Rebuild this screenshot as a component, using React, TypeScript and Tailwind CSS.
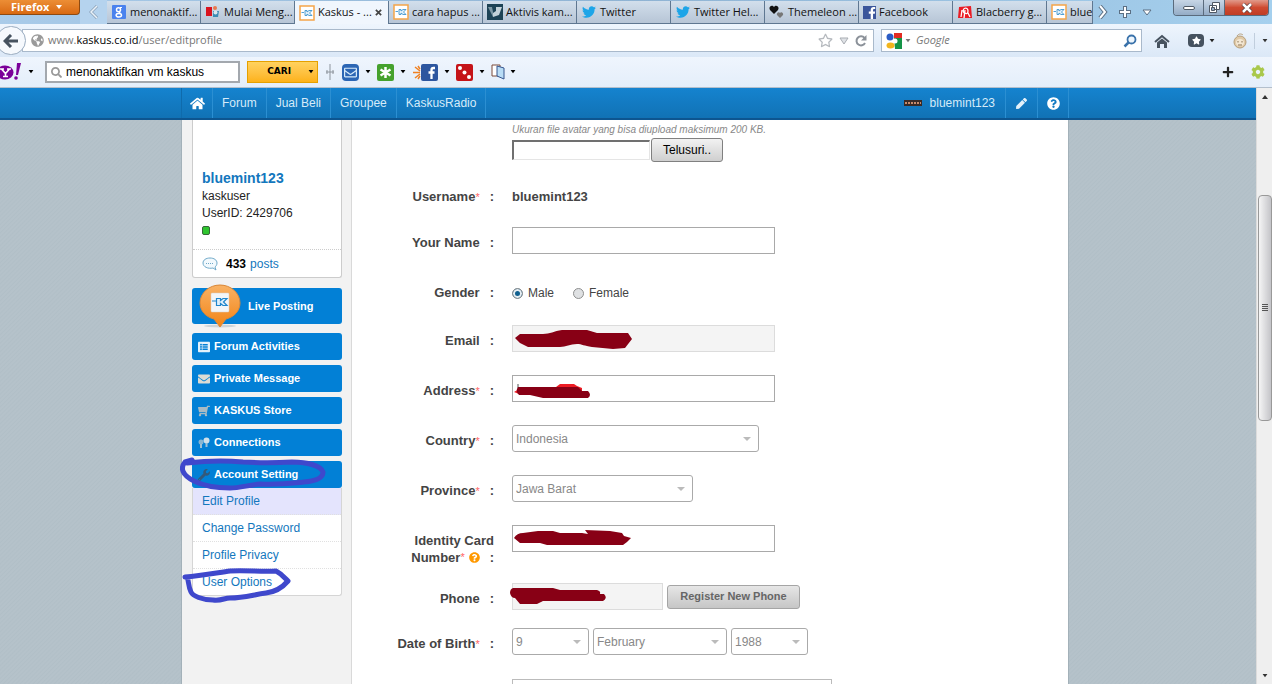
import type { ReactNode } from 'react'
import {
  FaFacebookF,
  FaHome,
  FaPen,
  FaQuestionCircle,
  FaRegEnvelope,
  FaSearch,
  FaShoppingCart,
  FaTwitter,
  FaWrench,
  FaEnvelope,
  FaListAlt,
  FaGlobeAmericas,
  FaRegStar,
  FaPlus,
  FaCog,
  FaStar,
} from 'react-icons/fa'

const KaskusIcon = () => (
  <svg viewBox="0 0 16 16" className="h-4 w-4 shrink-0">
    <rect x="1" y="1" width="14" height="14" fill="#fff" stroke="#f5a54a" strokeWidth="1.5" />
    <path d="M2.500 7.500h2.500M6 5.500h2V7l2-1.500h3L10.500 8 13 10.500h-3L8 9v1.500H6z" stroke="#3f95cf" strokeWidth="0.900" fill="#e3f1fa" />
  </svg>
)

const GoogleIcon = () => (
  <svg viewBox="0 0 16 16" className="h-4 w-4 shrink-0">
    <rect x="1" y="1" width="14" height="14" rx="1" fill="#4a82ee" />
    <circle cx="7.500" cy="5.800" r="2" fill="none" stroke="#fff" strokeWidth="1.500" />
    <ellipse cx="7.800" cy="11.300" rx="2.700" ry="1.700" fill="none" stroke="#fff" strokeWidth="1.500" />
    <path d="M9 3.500h2M8 8l1.500 1.500" stroke="#fff" strokeWidth="1.200" />
  </svg>
)

const ForumIcon = () => (
  <svg viewBox="0 0 16 16" className="h-4 w-4 shrink-0">
    <path d="M1 3h6v9H1z" fill="#d9131f" />
    <circle cx="10" cy="4" r="2" fill="#e9794d" />
    <path d="M8 7h6l-1 6H8z" fill="#3c8cb5" />
    <circle cx="10.500" cy="8.500" r="2" fill="#dbe7ee" />
  </svg>
)

const VbulletinIcon = () => (
  <svg viewBox="0 0 16 16" className="h-4 w-4 shrink-0">
    <rect width="16" height="16" fill="#1d4356" />
    <path d="M1 3h4l1 5v5L4 9z" fill="#7d98a5" />
    <path d="M6 13V9l3-2V3h6L12 11z" fill="#c3d2d9" />
  </svg>
)

const HeartsIcon = () => (
  <svg viewBox="0 0 16 16" className="h-4 w-4 shrink-0">
    <path d="M5 10L1 6C-1 3 3 0 5 3c2-3 6 0 4 3z" fill="#111" />
    <path d="M11 14l-3-3c-1-2 2-4 3-2 1-2 4 0 3 2z" fill="#777" />
  </svg>
)

const PinterestIcon = () => (
  <svg viewBox="0 0 16 16" className="h-4 w-4 shrink-0">
    <path d="M2 3l12-1 1 12H1z" fill="#ea1c24" />
    <path d="M4 13l1-7M7 9c-3-5 4-7 4-2 0 3-2 3-3 2M8 6l-1 8M11 9l2 4" stroke="#fff" strokeWidth="1.300" fill="none" />
  </svg>
)

const FacebookIcon = () => (
  <span className="flex h-[13px] w-[13px] shrink-0 items-end justify-end bg-[#3b559b]">
    <FaFacebookF className="h-3 w-2 text-white" />
  </span>
)

const TABS: { title: string; icon: ReactNode; active?: boolean }[] = [
  { title: 'menonaktif...', icon: <GoogleIcon /> },
  { title: 'Mulai Meng...', icon: <ForumIcon /> },
  { title: 'Kaskus - ...', icon: <KaskusIcon />, active: true },
  { title: 'cara hapus ...', icon: <KaskusIcon /> },
  { title: 'Aktivis kam...', icon: <VbulletinIcon /> },
  { title: 'Twitter', icon: <FaTwitter className="h-[14px] w-4 shrink-0 text-[#1da5e8]" /> },
  { title: 'Twitter Hel...', icon: <FaTwitter className="h-[14px] w-4 shrink-0 text-[#1da5e8]" /> },
  { title: 'Themeleon ...', icon: <HeartsIcon /> },
  { title: 'Facebook', icon: <FacebookIcon /> },
  { title: 'Blacberry g...', icon: <PinterestIcon /> },
]

const Caret = ({ className = 'text-black' }: { className?: string }) => (
  <svg viewBox="0 0 8 5" className={`h-1 w-2 shrink-0 ${className}`}>
    <path d="M1 0h6L4 4z" fill="currentColor" />
  </svg>
)

const TabStrip = () => (
  <div className="flex h-6 items-start bg-gradient-to-r from-[#a9cbe9] via-[#8fb3d3] to-[#a5d0ee]">
    <button className="flex h-[15px] w-20 shrink-0 items-center gap-1.5 rounded-br border-r border-b border-[#8d4a12] bg-gradient-to-b from-[#ec8e35] to-[#d9690f] pl-[11px] text-[11px] font-bold text-white">
      Firefox
      <svg viewBox="0 0 8 5" className="h-[5px] w-2">
        <path d="M1 0h6L4 4z" fill="#fff" />
      </svg>
    </button>
    <div className="flex h-6 w-[27px] shrink-0 items-center justify-center bg-[#b5d3ee]">
      <svg viewBox="0 0 10 14" className="h-[14px] w-[10px]">
        <path d="M8 1L2 7l6 6" fill="none" stroke="#8ba0b6" strokeWidth="3" />
        <path d="M8 1L2 7l6 6" fill="none" stroke="#e9f2fa" strokeWidth="1.500" />
      </svg>
    </div>
    <div className="flex min-w-0 flex-1 pt-px">
      {TABS.map(tab => (
        <button
          key={tab.title}
          className={`flex h-[23px] w-[94px] shrink-0 items-center gap-[3px] border-r border-[#5f7791] pl-1 text-left whitespace-nowrap text-[#111] ${
            tab.active ? 'bg-[#f0f6fd]' : 'border-b bg-gradient-to-b from-[#d2dfec] to-[#b7c5d6]'
          }`}
        >
          {tab.icon}
          <span>{tab.title}</span>
          {tab.active && (
            <svg viewBox="0 0 8 8" className="ml-auto mr-1.5 h-[7px] w-[7px]">
              <path d="M1 1l6 6M7 1L1 7" stroke="#444" strokeWidth="2" />
            </svg>
          )}
        </button>
      ))}
      <button className="flex h-[23px] w-[46px] min-w-0 items-center gap-[3px] overflow-hidden border-r border-b border-[#5f7791] bg-gradient-to-b from-[#d2dfec] to-[#b7c5d6] pl-1 text-[#111]">
        <KaskusIcon />
        blue
      </button>
    </div>
    <div className="flex h-6 w-20 shrink-0 items-center justify-around pr-4">
      <svg viewBox="0 0 10 14" className="h-[14px] w-[10px]">
        <path d="M2 1l5 6-5 6" fill="none" stroke="#5b6f83" strokeWidth="4" />
        <path d="M2 1l5 6-5 6" fill="none" stroke="#fff" strokeWidth="2" />
      </svg>
      <svg viewBox="0 0 12 12" className="h-3 w-3">
        <path d="M6 0v12M0 6h12" stroke="#5b6f83" strokeWidth="4" />
        <path d="M6 1v10M1 6h10" stroke="#fff" strokeWidth="2" />
      </svg>
      <svg viewBox="0 0 10 7" className="h-[7px] w-[10px]">
        <path d="M1 1h8L5 6z" fill="#fff" stroke="#5b6f83" />
      </svg>
    </div>
    <div className="mr-[3px] flex h-4 w-24 shrink-0 overflow-hidden rounded-b border border-t-0 border-[#5a6b7d]">
      <button aria-label="Minimize" className="flex w-[30px] items-center justify-center border-r border-[#5a6b7d] bg-gradient-to-b from-[#c7d6e6] to-[#94acc6]">
        <span className="h-1 w-3 rounded-sm border border-[#4f5965] bg-white" />
      </button>
      <button aria-label="Restore" className="flex w-[21px] items-center justify-center border-r border-[#5a6b7d] bg-gradient-to-b from-[#c7d6e6] to-[#94acc6]">
        <svg viewBox="0 0 11 11" className="h-[11px] w-[11px]">
          <path d="M3.500 .5h7v7h-7zM.5 3.500h7v7h-7z" fill="#fff" stroke="#4f5965" />
          <path d="M2.500 5.500h3v3h-3z" fill="#94acc6" stroke="#4f5965" />
        </svg>
      </button>
      <button aria-label="Close" className="flex flex-1 items-center justify-center bg-gradient-to-b from-[#e09a8a] via-[#cf4a30] to-[#bf3d25]">
        <svg viewBox="0 0 12 10" className="h-[10px] w-3">
          <path d="M2 1l8 8M10 1L2 9" stroke="#5a3a3a" strokeWidth="4" />
          <path d="M2 1l8 8M10 1L2 9" stroke="#fff" strokeWidth="2.500" />
        </svg>
      </button>
    </div>
  </div>
)

const AddressBar = () => (
  <div className="flex h-[33px] items-center bg-gradient-to-b from-[#eef5fd] to-[#dbe8f7]">
    <button aria-label="Back" className="relative z-10 -ml-1 flex h-[29px] w-[30px] shrink-0 items-center justify-center rounded-full border border-[#9aacc0] bg-[#f6f9fd]">
      <svg viewBox="0 0 16 14" className="h-[14px] w-4">
        <path d="M8 1L2 7l6 6M2 7h13" fill="none" stroke="#46525f" strokeWidth="3" />
      </svg>
    </button>
    <div className="-ml-1 flex h-[23px] min-w-0 flex-1 items-center border border-[#a9b9cb] bg-white pr-1.5 pl-2">
      <FaGlobeAmericas className="h-[13px] w-[13px] text-[#9a9a9a]" />
      <div className="ml-1 flex-1 text-[#777]">
        www.<span className="text-black">kaskus.co.id</span>/user/editprofile
      </div>
      <FaRegStar className="h-[15px] w-[15px] text-[#b5b9be]" />
      <svg viewBox="0 0 10 8" className="mx-1.5 h-2 w-[10px]">
        <path d="M1 1h8L5 7z" fill="#dfe2e6" stroke="#a9adb3" />
      </svg>
      <svg viewBox="0 0 12 12" className="h-3 w-3">
        <path d="M9.500 3A4.500 4.500 0 1 0 10 8" fill="none" stroke="#8b9199" strokeWidth="2" />
        <path d="M11.500 0v5.500H6z" fill="#8b9199" />
      </svg>
    </div>
    <div className="ml-[7px] flex h-[23px] w-[261px] shrink-0 items-center border border-[#a9b9cb] bg-white pr-1 pl-1">
      <svg viewBox="0 0 16 16" className="h-4 w-4">
        <path d="M8 0h8v5H8z" fill="#e22b22" />
        <path d="M8 5h8v11H9z" fill="#159447" />
        <path d="M0 5h6v4H0z" fill="#fff" />
        <circle cx="4" cy="4" r="3.500" fill="#2a5cc5" />
        <circle cx="9" cy="8" r="2.500" fill="#fff" />
        <ellipse cx="4.500" cy="12.500" rx="4" ry="3" fill="#f2b51d" />
      </svg>
      <Caret className="ml-0.5 text-[#777]" />
      <input
        aria-label="Search Google"
        placeholder="Google"
        className="ml-1 min-w-0 flex-1 bg-transparent outline-none placeholder:text-[#777] placeholder:italic"
      />
      <svg viewBox="0 0 14 14" className="h-[14px] w-[14px]">
        <circle cx="8.500" cy="5.500" r="4" fill="#eef6fd" stroke="#3a72aa" strokeWidth="1.800" />
        <path d="M5.500 8.500L1.500 12.500" stroke="#3a72aa" strokeWidth="2.500" />
      </svg>
    </div>
    <div className="flex w-[130px] shrink-0 items-center pl-3">
      <svg viewBox="0 0 16 14" className="h-[14px] w-4">
        <path d="M1 8l7-6 7 6" fill="none" stroke="#46525f" strokeWidth="2" />
        <path d="M3 8.500l5-4 5 4V14h-3v-4H6v4H3z" fill="#46525f" />
      </svg>
      <span className="ml-[18px] flex h-[13px] w-4 items-center justify-center rounded-sm bg-[#46525f]">
        <FaStar className="h-[9px] w-[9px] text-white" />
      </span>
      <Caret className="ml-1 text-[#222]" />
      <svg viewBox="0 0 16 16" className="ml-4 h-4 w-4">
        <circle cx="8" cy="9" r="6" fill="#e0caa8" stroke="#b79f7b" />
        <path d="M5 3c2-3 5-2 6-1" stroke="#b79f7b" fill="none" />
        <ellipse cx="8" cy="9.500" rx="4" ry="3.500" fill="#f3e7d3" />
        <path d="M6 8v1.500M10 8v1.500M6 12h4" stroke="#8b7350" />
      </svg>
      <span className="mx-1.5 h-4 w-px bg-[#c1cedd]" />
      <Caret className="text-[#333]" />
    </div>
  </div>
)

const YahooToolbar = () => (
  <div className="flex h-[31px] items-center border-b border-[#b3bfcc] bg-gradient-to-b from-[#eff5fd] to-[#e4eefa]">
    <svg viewBox="0 0 22 18" className="h-[18px] w-[22px]">
      <ellipse cx="5" cy="9.500" rx="8.500" ry="7" fill="#7b0099" />
      <path d="M0 6h4M7 6h4M1.500 6l4 4.500L9.500 6M5.500 10v3.500M3 13.500h5" stroke="#fff" strokeWidth="1.600" fill="none" />
      <path d="M17 0h4l-3 12h-2z" fill="#7b0099" />
      <circle cx="16" cy="15" r="1.800" fill="#7b0099" />
    </svg>
    <Caret className="ml-[5px]" />
    <label className="ml-[10px] flex h-[22px] w-[195px] items-center gap-1 border-2 border-[#a3a8ae] bg-white px-1">
      <FaSearch className="h-[11px] w-[11px] shrink-0 text-[#999]" />
      <input
        aria-label="Yahoo search"
        defaultValue="menonaktifkan vm kaskus"
        className="w-full min-w-0 bg-transparent font-['Liberation_Sans',sans-serif] text-xs text-black outline-none"
      />
    </label>
    <button className="ml-[7px] flex h-[22px] w-[71px] items-center justify-end gap-4 border border-[#e5a000] bg-gradient-to-b from-[#ffd25e] to-[#fdb215] pr-0.5 font-['DejaVu_Sans',sans-serif] text-[9px] font-bold text-black">
      CARI
      <Caret />
    </button>
    <svg viewBox="0 0 8 16" className="mx-2 h-4 w-2">
      <path d="M4 0v16M1 6v4M7 6v4M0 8h8" stroke="#8d949c" />
    </svg>
    <span className="flex h-[17px] w-[17px] items-center justify-center rounded-sm bg-[#2c66b4]">
      <FaRegEnvelope className="h-[13px] w-[13px] text-[#d8ebfa]" />
    </span>
    <Caret className="mx-[5px]" />
    <svg viewBox="0 0 17 17" className="h-[17px] w-[17px]">
      <rect width="17" height="17" rx="2" fill="#45a12d" />
      <path d="M8.500 3v11M3.500 5.500l10 6M13.500 5.500l-10 6" stroke="#fff" strokeWidth="2.500" />
    </svg>
    <Caret className="mx-[5px]" />
    <svg viewBox="0 0 26 17" className="h-[17px] w-[26px]">
      <path d="M8 8.500H1M8 7L3 3M8 10l-5 4M8 5L6 2M8 12l-2 3" stroke="#f08122" strokeWidth="1.500" />
      <rect x="9" width="17" height="17" rx="2" fill="#2d569f" />
      <path d="M23 4h-1.500q-2 0-2 2v9M16.500 8.500h6" stroke="#fff" strokeWidth="2.300" fill="none" />
    </svg>
    <Caret className="mx-[5px]" />
    <svg viewBox="0 0 17 17" className="h-[17px] w-[17px]">
      <rect width="17" height="17" rx="2" fill="#c51318" />
      <circle cx="4" cy="4" r="2" fill="#fff" />
      <circle cx="8.500" cy="8.500" r="2" fill="#fff" />
      <circle cx="13" cy="13" r="2" fill="#fff" />
    </svg>
    <Caret className="mx-[5px]" />
    <svg viewBox="0 0 14 16" className="h-4 w-[14px]">
      <path d="M1 1h8v11H1z" fill="#fff" stroke="#7a4b3a" />
      <path d="M6 2l7 2v11l-7-3z" fill="#b8dcf5" stroke="#34548d" />
    </svg>
    <Caret className="ml-1" />
    <FaPlus className="ml-auto h-3 w-3 text-[#222]" />
    <FaCog className="mr-[7px] ml-[17px] h-[14px] w-[14px] text-[#a9c84b]" />
  </div>
)

const NavLink = ({ children }: { children: ReactNode }) => (
  <a href="#" className="flex items-center border-l border-[#2b8fd2] px-[9px] text-[#d6ebf9]">
    {children}
  </a>
)

const SiteHeader = () => (
  <header className="h-8 shrink-0 border-b-2 border-[#0d5590] bg-gradient-to-b from-[#1583cf] to-[#1172b5] pr-1.5">
    <nav className="mx-auto flex h-full w-full max-w-[888px]">
      <a href="#" aria-label="Home" className="flex w-[31px] items-center justify-center border-l border-[#0f6bac]">
        <FaHome className="h-[15px] w-[15px] text-white" />
      </a>
      <NavLink>Forum</NavLink>
      <NavLink>Jual Beli</NavLink>
      <NavLink>Groupee</NavLink>
      <NavLink>KaskusRadio</NavLink>
      <div className="flex flex-1 items-center justify-end gap-2 border-l border-[#2b8fd2] pr-[10px]">
        <svg viewBox="0 0 18 6" className="h-1.5 w-[18px]">
          <rect width="18" height="6" fill="#3a2a25" />
          <path d="M1 3h16" stroke="#c58a6b" strokeWidth="2" strokeDasharray="2 1" />
        </svg>
        <a href="#" className="text-[#d6ebf9]">bluemint123</a>
      </div>
      <a href="#" aria-label="Edit" className="flex w-8 items-center justify-center border-l border-[#2b8fd2]">
        <FaPen className="h-[11px] w-[11px] text-[#e4f1fa]" />
      </a>
      <a href="#" aria-label="Help" className="flex w-8 items-center justify-center border-x border-[#2b8fd2]">
        <FaQuestionCircle className="h-[13px] w-[13px] text-white" />
      </a>
    </nav>
  </header>
)

const MENU = [
  { label: 'Forum Activities', icon: <FaListAlt className="h-3 w-3 text-[#e3f1fb]" /> },
  { label: 'Private Message', icon: <FaEnvelope className="h-3 w-3 text-[#dcdcd4]" /> },
  { label: 'KASKUS Store', icon: <FaShoppingCart className="h-3 w-3 -scale-x-100 text-[#a9bac4]" /> },
  {
    label: 'Connections',
    icon: (
      <svg viewBox="0 0 12 12" className="h-3 w-3">
        <circle cx="3" cy="5" r="2.500" fill="#88b5d2" />
        <circle cx="8.500" cy="3.500" r="3" fill="#cfe0ea" />
        <path d="M3 7v4M8.500 6v4" stroke="#9fc0d5" strokeWidth="2" />
      </svg>
    ),
  },
]

const MenuButton = ({ label, icon }: { label: string; icon: ReactNode }) => (
  <button className="flex h-[27px] w-full items-center gap-1 rounded-[3px] bg-[#0280d6] pl-1.5 text-[11px] font-bold text-white">
    {icon}
    {label}
  </button>
)

const Sidebar = () => (
  <aside className="w-[170px] shrink-0 border-r border-[#d9d9d9] bg-[#f2f2f2] px-[10px] pr-[9px]">
    <div className="rounded-b-[3px] border border-t-0 border-[#ccc] bg-white">
      <div className="h-12" />
      <div className="border-b border-dotted border-[#ccc] px-[9px] pb-2.5 leading-[17px] text-[#222]">
        <a href="#" className="block text-sm leading-5 font-bold text-[#1377bd]">bluemint123</a>
        <div>kaskuser</div>
        <div>UserID: 2429706</div>
        <div className="flex h-[17px] items-center">
          <span className="h-[9px] w-2 rounded-[2px] border border-[#37663a] bg-[#2fc52f]" />
        </div>
      </div>
      <div className="flex h-[27px] items-center px-[9px]">
        <svg viewBox="0 0 16 14" className="h-[14px] w-4">
          <path d="M8 1c4 0 7 2 7 5 0 2-1 3-2 4l1 3-3-2c-5 1-10-1-10-5 0-3 3-5 7-5z" fill="#f2f9fd" stroke="#6fa9c9" />
          <path d="M4 6.500h8" stroke="#6fa9c9" strokeDasharray="1 1" />
        </svg>
        <b className="ml-2 text-black">433</b>
        <a href="#" className="ml-1 text-[#1377bd]">posts</a>
      </div>
    </div>

    <button className="relative mt-2.5 flex h-9 w-full items-center rounded-[3px] bg-[#0280d6] pl-14 text-[11px] font-bold text-white">
      <svg viewBox="0 0 42 46" className="absolute -top-1 left-[7px] h-[46px] w-[42px]">
        <defs>
          <linearGradient id="pin" x1="0" y1="0" x2="0" y2="1">
            <stop offset="0" stopColor="#f9b265" />
            <stop offset="1" stopColor="#f28416" />
          </linearGradient>
        </defs>
        <ellipse cx="21" cy="42" rx="16" ry="1.500" fill="#cdd3d8" />
        <path d="M21 1c11 0 20 8 20 18 0 8-6 14-14 16l-6 8-6-8C7 33 1 27 1 19 1 9 10 1 21 1z" fill="url(#pin)" stroke="#d9883a" />
        <rect x="12" y="9" width="18" height="19" rx="1" fill="#f3f6f8" stroke="#d8cfc4" strokeWidth="0.500" />
        <path d="M13 17h4M17.500 14.500h4v2l2.500-2H28l-3.500 3.500 3.500 3.500h-4l-2.500-2v2h-4v-3z" fill="#dff0fb" stroke="#1f86cc" strokeWidth="1.200" />
      </svg>
      Live Posting
    </button>

    <div className="mt-[9px] flex flex-col gap-[5px]">
      {MENU.map(item => <MenuButton key={item.label} {...item} />)}

      <div className="relative">
        <MenuButton label="Account Setting" icon={<FaWrench className="h-3 w-3 text-[#34597a]" />} />
        <ul className="rounded-b-[3px] border border-t-0 border-[#d5d5d5] bg-white">
          {['Edit Profile', 'Change Password', 'Profile Privacy', 'User Options'].map(item => (
            <li key={item} className="border-b border-dotted border-[#e0e0e0] first:bg-[#e4e4fd] last:border-0">
              <a href="#" className="block pl-[9px] leading-[26px] text-[#1377bd]">{item}</a>
            </li>
          ))}
        </ul>
        <svg viewBox="-12 -4 152 150" className="pointer-events-none absolute -top-1 -left-3 h-[150px] w-[152px]">
          <g fill="none" stroke="#3f48cc" strokeWidth="5" strokeLinecap="round" strokeLinejoin="round">
            <path d="M0 -1L-7 1C-12 7-10 14 2 20C14 26 28 27 38 27C48 27 56 24 68 23C88 24 102 22 112 21C124 20 131 17 131 11C129 5 116 1 100 1C80 2 70 2 51 1C30-1 12 0-5 2" />
            <path d="M-7 116C8 115 24 112 38 110C54 109 70 111 84 110C90 113 93 117 96 120C90 127 82 131 74 132C60 134 52 137 38 137C32 137 30 140 21 139C10 139 1 135-1 131C-4 125-3 120-5 116" />
          </g>
        </svg>
      </div>
    </div>
  </aside>
)

const Row = ({ id, label, required, className = 'mb-[23px]', children }: {
  id?: string
  label: string
  required?: boolean
  className?: string
  children: ReactNode
}) => (
  <div className={`flex min-h-[27px] items-start gap-[18px] ${className}`}>
    <label htmlFor={id} className="flex w-[142px] shrink-0 justify-end gap-2.5 pt-[7px] text-[13px] leading-[17px] font-bold text-[#444]">
      <span>
        {label}
        {required && <Star />}
      </span>
      <span>:</span>
    </label>
    {children}
  </div>
)

const Star = () => <span className="text-[11px] font-normal text-[#f66]">*</span>

const Field = ({ id, disabled, className = 'w-[263px]', children }: {
  id: string
  disabled?: boolean
  className?: string
  children?: ReactNode
}) => (
  <div className={`relative shrink-0 ${className}`}>
    <input
      id={id}
      disabled={disabled}
      className="block h-[27px] w-full border border-[#a9a9a9] bg-white px-1 disabled:border-[#dcdcdc] disabled:bg-[#f4f4f4]"
    />
    {children && (
      <svg viewBox="-4 0 130 27" className="pointer-events-none absolute top-0 -left-1 h-[27px] w-[130px]" fill="#880015">
        {children}
      </svg>
    )}
  </div>
)

const Select = ({ id, label, value, className }: { id?: string; label?: string; value: string; className: string }) => (
  <div className={`relative shrink-0 ${className}`}>
    <select
      id={id}
      aria-label={label}
      className="block h-[27px] w-full appearance-none rounded-[3px] border border-[#aaa] bg-white px-[3px] text-[#888]"
    >
      <option>{value}</option>
    </select>
    <svg viewBox="0 0 8 4" className="pointer-events-none absolute top-3 right-2 h-1 w-2">
      <path d="M0 0h8L4 4z" fill="#bbb" />
    </svg>
  </div>
)

const Radio = ({ label, checked }: { label: string; checked?: boolean }) => (
  <label className="flex items-center gap-[5px] text-[#444]">
    <input
      type="radio"
      name="gender"
      defaultChecked={checked}
      className="h-[11px] w-[11px] appearance-none rounded-full border border-[#8e8f8f] bg-[#dfe1e3] checked:bg-[#10608f] checked:shadow-[inset_0_0_0_2px_#e8eef2]"
    />
    {label}
  </label>
)

const ProfileForm = () => (
  <form className="min-w-0 flex-1 bg-white pt-0.5">
    <div className="mb-[19px] ml-40">
      <div className="text-[10px] leading-4 text-[#888] italic">Ukuran file avatar yang bisa diupload maksimum 200 KB.</div>
      <div className="flex items-center gap-px">
        <input aria-label="Avatar file" className="h-5 w-[138px] border-t-2 border-l-2 border-r border-b border-t-[#707070] border-l-[#707070] border-r-[#e5e5e5] border-b-[#e5e5e5]" />
        <button type="button" className="h-6 w-[72px] rounded-[3px] border border-[#808080] bg-gradient-to-b from-[#f2f2f2] to-[#cfcfcf] text-black">
          Telusuri..
        </button>
      </div>
    </div>

    <Row label="Username" required className="mb-[19px]">
      <b className="pt-[7px] text-[13px] leading-[17px] text-[#444]">bluemint123</b>
    </Row>
    <Row id="name" label="Your Name">
      <Field id="name" />
    </Row>
    <Row label="Gender" className="mb-[21px]">
      <div className="flex gap-[19px] pt-2 leading-[17px]">
        <Radio label="Male" checked />
        <Radio label="Female" />
      </div>
    </Row>
    <Row id="email" label="Email">
      <Field id="email" disabled>
        <path d="M3 13L8 9H31C38 9 42 6 50 5H75L85 8H116L120 14 113 23 101 24 80 22C72 21 70 19 65 19C58 19 54 22 48 22H16L8 18z" />
      </Field>
    </Row>
    <Row id="address" label="Address" required>
      <Field id="address">
        <path d="M2 17l5-3v5zM44 12l4-3h14l3 2 5 2v5z" fill="#ed1c24" />
        <path d="M6 9v4" stroke="#555" />
        <path d="M6 12H66L70 16H76Q80 20 76 23H31L18 20H7Q3 16 6 12z" />
      </Field>
    </Row>
    <Row id="country" label="Country" required>
      <Select id="country" value="Indonesia" className="w-[247px]" />
    </Row>
    <Row id="province" label="Province" required>
      <Select id="province" value="Jawa Barat" className="w-[181px]" />
    </Row>
    <div className="mb-[17px] flex items-start gap-[18px]">
      <label htmlFor="identity" className="w-[142px] shrink-0 pt-[7px] text-right text-[13px] leading-[17px] font-bold text-[#444]">
        Identity Card
        <span className="flex items-center justify-end">
          Number
          <Star />
          <FaQuestionCircle className="mr-2.5 ml-1 h-[11px] w-[11px] text-[#f90]" />
          :
        </span>
      </label>
      <Field id="identity">
        <path d="M2 13Q5 8 11 8L26 6H41L48 8H70L76 9 73 5 98 6 110 8 112 11 119 13 115 17 111 20H35L28 18H8z" />
      </Field>
    </div>
    <Row id="phone" label="Phone" className="mb-[18px]">
      <div className="flex items-center gap-1">
        <Field id="phone" disabled className="w-[151px]">
          <path d="M-2 10Q-2 6 1 5H41L48 7H85Q89 8 88 11H92Q96 15 91 18H31L25 21H8L3 15Q-1 15-2 10z" />
        </Field>
        <button type="button" className="h-6 w-[133px] rounded-[3px] border border-[#a5a5a5] bg-gradient-to-b from-[#e6e6e6] to-[#c6c6c6] text-[11px] font-bold text-[#666]">
          Register New Phone
        </button>
      </div>
    </Row>
    <Row id="day" label="Date of Birth" required className="mb-6">
      <div className="flex gap-1">
        <Select id="day" value="9" className="w-[77px]" />
        <Select label="Month" value="February" className="w-[134px]" />
        <Select label="Year" value="1988" className="w-[77px]" />
      </div>
    </Row>
    <textarea aria-label="Bio" className="ml-40 block h-20 w-80 border border-[#bbb]" />
  </form>
)

const Scrollbar = () => (
  <div className="flex w-4 shrink-0 flex-col items-center border-l border-[#dcdcdc] bg-[#efefef]">
    <div className="flex h-[17px] items-center">
      <svg viewBox="0 0 8 4" className="h-1 w-2"><path d="M4 0l3 4H1z" fill="#333" /></svg>
    </div>
    <div className="flex-[90]" />
    <div className="flex w-[14px] flex-[226] flex-col items-center justify-center gap-px rounded-sm border border-[#999] bg-gradient-to-r from-[#f5f5f5] to-[#c4c4c8]">
      <span className="h-px w-1.5 bg-[#555]" />
      <span className="h-px w-1.5 bg-[#555]" />
      <span className="h-px w-1.5 bg-[#555]" />
      <span className="h-px w-1.5 bg-[#555]" />
    </div>
    <div className="flex-[247]" />
    <div className="flex h-[17px] items-center"><Caret className="text-[#333]" /></div>
  </div>
)

const App = () => (
  <div className="flex h-screen flex-col overflow-hidden bg-white pr-2 pb-px font-['Open_Sans','Noto_Sans',sans-serif] text-[11px]">
    <TabStrip />
    <AddressBar />
    <YahooToolbar />
    <div className="flex min-h-0 flex-1">
      <div className="flex min-w-0 flex-1 flex-col font-['Liberation_Sans',Arial,sans-serif] text-xs">
        <SiteHeader />
        <main className="min-h-0 flex-1 overflow-hidden bg-[repeating-linear-gradient(135deg,#b5c2ca_0px,#b5c2ca_1px,#b1bfc7_2px,#b5c2ca_3px)] pr-1.5">
          <div className="mx-auto flex h-full w-full max-w-[888px] border-x border-[#a3b1b9]">
            <Sidebar />
            <ProfileForm />
          </div>
        </main>
      </div>
      <Scrollbar />
    </div>
  </div>
)

export default App
